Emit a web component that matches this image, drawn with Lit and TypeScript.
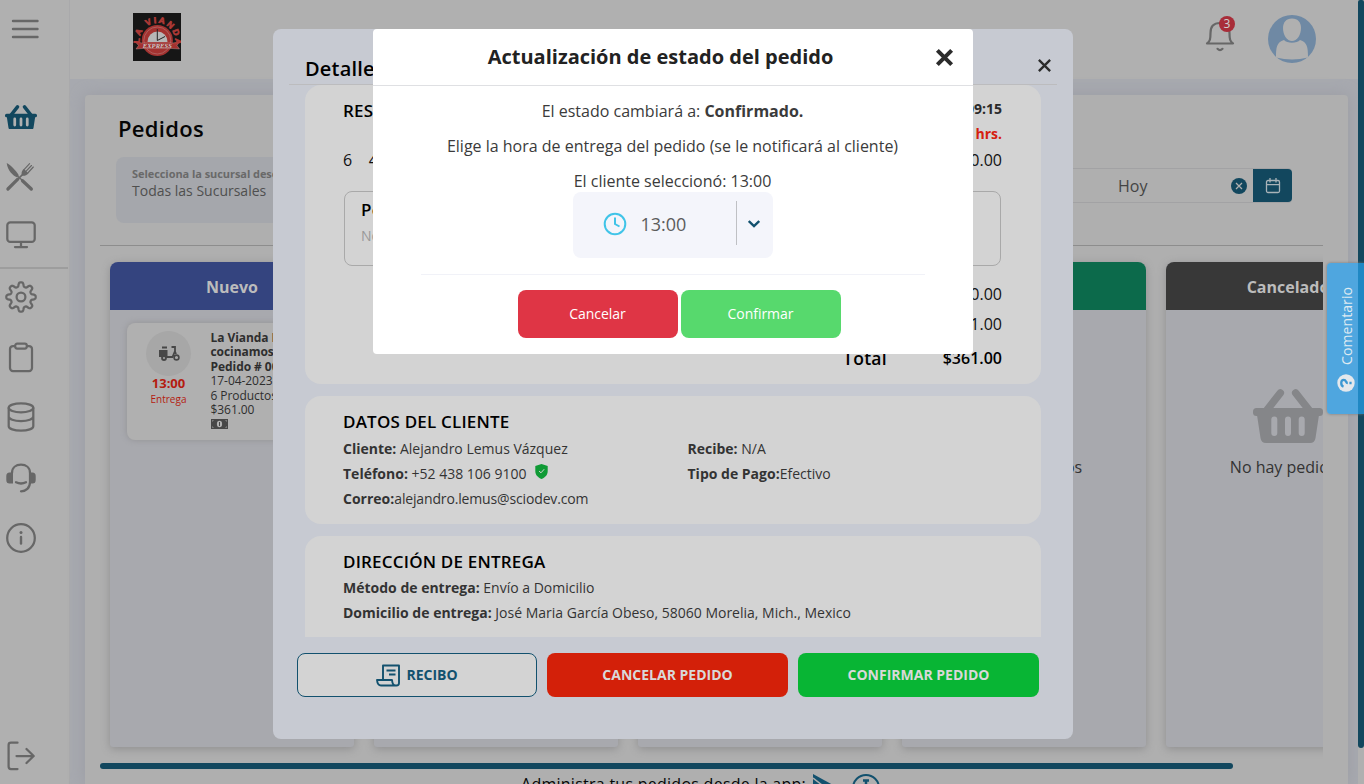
import { LitElement, html, svg, css } from "lit";
import { customElement } from "lit/decorators.js";

const gearPath = (() => {
  const pts: string[] = [];
  for (let i = 0; i < 240; i++) {
    const a = (i / 240) * Math.PI * 2;
    const r = 12.6 + 2.2 * Math.tanh(1.8 * Math.cos(8 * a));
    pts.push(`${(16 + r * Math.cos(a)).toFixed(2)} ${(16 + r * Math.sin(a)).toFixed(2)}`);
  }
  return `M${pts.join("L")}Z`;
})();

const basket = (w: number, cls: string) => html`
  <svg class="basket ${cls}" width=${w} height=${(w * 54) / 70} viewBox="0 0 70 54">
    <path d="M14 21L27.3 4M56 21L42.7 4" class="bh" />
    <rect x="0" y="19" width="70" height="8" rx="3.5" />
    <path d="M4 26H66L62.5 49Q61.8 54 57 54H13Q8.200 54 7.500 49Z" />
    <path class="slot" d="M21.300 30.500V44M35 30.500V44M48.700 30.500V44" />
  </svg>`;

const navIcons: Record<string, unknown> = {
  food: svg`<path class="f" d="M1.700 2C5 3.500 10 8.500 13.800 14.200L11.800 16.200C8 14.800 2.600 9.500 1.700 2Z"/>
    <path d="M17.500 19.700L26.300 28" stroke-width="3.300"/><path d="M12 14.500L18 20" stroke-width="1.300"/>
    <path d="M12.800 18.200L2.900 28" stroke-width="3.200"/><path d="M12 19L18 13.200" stroke-width="1.600"/>
    <path class="f" d="M16.600 13.600C16.300 10.500 17.400 9.400 18.600 8.300L20 9L21.500 10.500L23 12L23.400 12.500C21.500 14.500 19.500 15 17.500 14.700Z"/>
    <path d="M18.800 8.900L24.600 2.600M20.900 10.300L26.500 4.500M22.800 12L28.300 6" stroke-width="1.150"/>`,
  screen: svg`<rect x="2.300" y="3.300" width="27.400" height="19.600" rx="3"/><path d="M16 23V28M10 28.100H22"/>`,
  gear: svg`<path d=${gearPath}/><circle cx="16" cy="16" r="4.400"/>`,
  clip: svg`<rect x="5" y="5" width="22" height="25" rx="3"/><rect class="bg" x="10.200" y="2.600" width="11.600" height="5" rx="2"/>`,
  data: svg`<ellipse cx="16" cy="6.800" rx="12.300" ry="4.500"/><path d="M3.700 7V25.200C3.700 27.700 9 29.700 16 29.700S28.300 27.700 28.300 25.200V7M3.700 15.500C3.700 18 9 20 16 20S28.300 18 28.300 15.500"/>`,
  headset: svg`<path d="M7 11C7 5.500 11 2.700 16 2.700S25 5.500 25 11V20C25 26 21 29.300 16 29.300M11 20.200Q16 22.800 21 20.200"/>
    <path class="f" d="M8 10.500H4.500Q1.300 10.500 1.300 14V18Q1.300 21.500 4.500 21.500H8ZM24 10.500H27.500Q30.700 10.500 30.700 14V18Q30.700 21.500 27.500 21.500H24Z"/>`,
  info: svg`<circle cx="16" cy="16" r="13.800"/><path d="M16 15V21.500" stroke-width="2.400"/><circle class="f" cx="16" cy="10.600" r="1.500"/>`,
  exit: svg`<path d="M12.500 2.700H6Q3.600 2.700 3.600 5V26.500Q3.600 29 6 29H12.500M11.500 16H28.500M21.500 9L28.700 16L21.500 23"/>`,
};
const nav = (n: string) => html`<svg class="ni" width="32" height="32" viewBox="0 0 32 32">${navIcons[n]}</svg>`;
const cross = (s: number, w: number) => html`<svg class="cross" width=${s} height=${s} viewBox="0 0 16 16"><path d="M2 2L14 14M14 2L2 14" stroke-width=${w}/></svg>`;

const columns = [
  { name: "Nuevo", cls: "blue", state: "order" },
  { name: "Confirmado", cls: "orange", state: "" },
  { name: "En camino", cls: "orange", state: "" },
  { name: "Entregado", cls: "green", state: "empty" },
  { name: "Cancelado", cls: "dark", state: "empty" },
];

@customElement("app-root")
export class AppRoot extends LitElement {
  static styles = css`
    :host { display: block; position: relative; width: 1364px; height: 784px; overflow: hidden; background: #a7a9af;
      font-family: "Open Sans", "Noto Sans", sans-serif; color: #333; }
    * { box-sizing: border-box; }
    svg { display: block; flex: none; }
    b { font-weight: 700; }
    .app { display: grid; grid-template-columns: 70px 1288px 6px; grid-template-rows: 784px; height: 784px; }
    .side { background: #b0b0b0; border-right: 1px solid #a9a9ab; display: flex; flex-direction: column; }
    .burger { height: 58px; padding: 19px 0 0 11px; }
    .nav { display: flex; flex-direction: column; padding-top: 29px; }
    .item { height: 60px; padding-left: 5px; display: flex; align-items: center; }
    .short { height: 56px; }
    .rule { height: 2px; width: 68px; margin: 4px 0 -2px; background: #9d9d9d; }
    .low { margin-top: 1px; }
    .out { margin-top: auto; margin-bottom: -2px; }
    .ni, .burger svg { fill: none; stroke: #676767; stroke-width: 2.250; stroke-linecap: round; stroke-linejoin: round; }
    .ni .f { fill: #676767; stroke: none; }
    .ni .bg { fill: #b0b0b0; }
    .basket { fill: #12475e; }
    .basket .bh { fill: none; stroke: #12475e; stroke-width: 7.500; stroke-linecap: round; }
    .basket .slot { fill: none; stroke: #b0b0b0; stroke-width: 6; stroke-linecap: round; }
    .basket.big { fill: #858689; }
    .basket.big .bh { stroke: #858689; }
    .basket.big .slot { stroke: #a8a9ae; }
    .main { display: flex; flex-direction: column; min-width: 0; min-height: 0; }
    .top { height: 79px; flex: none; background: #b0b0b0; display: flex; align-items: flex-start; padding: 13px 42px 0 63px; }
    .bellbox { position: relative; margin: 7px 0 0 auto; width: 32px; height: 34px; }
    .badge { position: absolute; left: 15px; top: -4px; width: 16px; height: 16px; border-radius: 50%; background: #a82d39; color: #ccc; font: 12px/16px "Noto Sans", sans-serif; text-align: center; }
    .avatar { margin: 2px 0 0 32px; }
    .panel { margin: 16px 10px 0 15px; flex: 1; background: #afafaf; border-radius: 4px 4px 0 0; box-shadow: 0 0 16px #9b9ca3; padding: 19px 25px 0 15px; display: flex; flex-direction: column; min-height: 0; }
    h1 { margin: 0 0 0 18px; font-size: 22px; line-height: 28px; font-weight: 600; color: #050505; letter-spacing: .3px; flex: none; }
    .filters { display: flex; margin-top: 15px; height: 66px; flex: none; padding: 0 31px 0 16px; justify-content: space-between; }
    .select { width: 260px; height: 66px; border-radius: 8px; background: #a5a7ac; padding: 8px 16px; white-space: nowrap; overflow: hidden; }
    .lab { font-size: 11px; line-height: 17px; font-weight: 700; color: #696969; letter-spacing: -.06px; }
    .val { font-size: 14px; line-height: 17px; color: #4f4f4f; }
    .date { display: flex; margin-top: 11px; height: 35px; width: 360px; border: 1px solid #a2a2a4; border-right: 0; border-radius: 4px; align-items: center; }
    .hoy { margin-left: auto; font-size: 16px; color: #444; width: 30px; }
    .clr { width: 16px; height: 16px; border-radius: 50%; background: #12475e; margin: 0 6px 0 83px; display: flex; align-items: center; justify-content: center; }
    .clr .cross { stroke: #b0b0b0; }
    .cal { width: 39px; height: 33px; background: #12475e; border-radius: 0 4px 4px 0; display: flex; align-items: center; justify-content: center; }
    .cal svg { fill: none; stroke: #a9b3b8; stroke-width: 1.300; }
    .board { display: flex; gap: 20px; border-top: 1px solid #8d8d8d; margin-top: 22px; padding: 16px 10px 0; height: 518px; flex: none; overflow: hidden; }
    .col { width: 244px; flex: none; height: 485px; border-radius: 8px 8px 3px 3px; background: #a8a9ae; box-shadow: 0 2px 8px #8f8f90; }
    .ch { height: 48px; border-radius: 8px 8px 0 0; font-size: 16px; line-height: 50px; font-weight: 700; color: #bcbcbc; text-align: center; }
    .blue { background: #34447f; } .orange { background: #9b5f1c; } .green { background: #0c6a4b; } .dark { background: #383838; }
    .empty { display: flex; flex-direction: column; align-items: center; padding-top: 79px; font-size: 16px; line-height: 24px; color: #333; gap: 12px; }
    .order { margin: 13px 17px; height: 117px; border-radius: 8px; background: #b0b0b0; box-shadow: 0 0 6px #929294; display: flex; padding: 8px 0 0 19px; overflow: hidden; }
    .who { width: 45px; display: flex; flex-direction: column; align-items: center; color: #b41c10; }
    .moto { width: 45px; height: 45px; border-radius: 50%; background: #a7a7a7; display: flex; align-items: center; justify-content: center; }
    .hr { font-size: 13px; font-weight: 700; line-height: 16px; margin-top: -1px; }
    .en { font-size: 10px; line-height: 17px; }
    .lines { margin-left: 19.500px; font-size: 12px; line-height: 14.400px; white-space: nowrap; color: #2e2e2e; letter-spacing: -.06px; }
    .lines svg { margin-top: 2px; }
    .thumb { height: 6px; width: 1133px; border-radius: 3px; background: #12475e; flex: none; }
    .foot { display: flex; align-self: flex-start; gap: 7px; font-size: 16px; line-height: 24px; color: #050505; padding: 3px 0 0 421px; font-weight: 500; letter-spacing: .26px; }
    .foot svg { margin-top: 2px; }
    .sb { background: #b0b0b0; }
    .sb div { height: 748px; background: #12475e; border-radius: 2px 2px 3px 3px; }
    .tab { position: absolute; left: 1327px; top: 263px; width: 37px; height: 151px; border-radius: 4px 0 0 4px; background: linear-gradient(90deg, #4fa6df 31px, #2088c4 31px); box-shadow: 0 0 3px #777; display: flex; flex-direction: column; align-items: center; color: #dfeaf2; }
    .tab span { writing-mode: vertical-rl; transform: rotate(180deg); font-size: 14px; line-height: 20px; height: 78px; margin: 24px 0 0 2px; letter-spacing: .1px; font-weight: 500; }
    .tab svg { margin-top: 9px; }
    .detail { position: absolute; left: 273px; top: 29px; width: 800px; height: 710px; border-radius: 8px; background: #c7cad2; padding: 0 16px; }
    .dh { height: 56px; border-bottom: 1px solid #bcbcbe; padding: 24px 5px 0 16px; display: flex; justify-content: space-between; font-size: 20px; line-height: 32px; font-weight: 600; color: #000; letter-spacing: .2px; }
    .dh .cross { margin-top: 5px; }
    .cross { stroke: #2b2b2b; fill: none; }
    .scroll { height: 552px; margin: 0 16px; overflow: hidden; display: flex; flex-direction: column; gap: 12px; }
    .card { background: #d3d3d3; border-radius: 16px; padding: 0 39px 0 38px; flex: none; white-space: nowrap; font-size: 14px; line-height: 25px; color: #333; }
    .c1 { height: 299px; } .c2 { height: 128px; } .c3 { height: 128px; }
    .ct { font-size: 17px; line-height: 24px; font-weight: 600; color: #000; letter-spacing: .2px; }
    .c2 .ct { padding-top: 14px; height: 40px; } .c3 .ct { padding-top: 14px; height: 39px; }
    .c1 { color: #111; }
    .r { display: flex; justify-content: space-between; }
    .r1 { padding-top: 11px; align-items: flex-start; }
    .r1 .ct { padding-top: 3px; }
    .stamp { text-align: right; font-weight: 700; color: #2a2a2a; }
    .red { color: #d5200f; }
    .big { font-size: 16px; line-height: 28px; }
    .note { margin: 17px 1px 0; height: 75px; border: 1px solid #a9a9a9; border-radius: 8px; padding: 6px 16px; }
    .note .g { color: #999; line-height: 28px; }
    .tot { display: flex; justify-content: flex-end; font-size: 16px; line-height: 30px; }
    .tot.first { padding-top: 13px; }
    .tot span:last-child { width: 115px; text-align: right; }
    .sum { font-weight: 600; color: #000; line-height: 38px; }
    .sum span:first-child { font-size: 17.500px; letter-spacing: .3px; }
    .two { display: grid; grid-template-columns: 344.500px 1fr; }
    .two .rt :first-child { line-height: 25px; }
    .two .rt { line-height: 24px; }
    .mail { letter-spacing: -.15px; }
    .tel { display: flex; align-items: center; }
    .tel svg { margin: -4px 0 0 8px; }
    .btns { display: grid; grid-template-columns: 240px 241px 241px; gap: 10px; margin: 16px 8px 0; }
    .btn { height: 44px; border-radius: 8px; display: flex; align-items: center; justify-content: center; gap: 5px; font-size: 14px; font-weight: 700; color: #d9d9d9; padding-bottom: 2px; }
    .rec { background: #d3d3d3; border: 1px solid #12516e; color: #12516e; }
    .rec svg { margin-top: 2px; }
    .no { background: #d32009; } .ok { background: #08b534; }
    .dialog { position: absolute; left: 373px; top: 29px; width: 600px; height: 325px; border-radius: 4px; background: #fff; color: #3b3b3b; display: flex; flex-direction: column; align-items: center; font-size: 16px; }
    .mh { width: 600px; height: 57px; flex: none; border-bottom: 1px solid #dfe0e3; display: grid; grid-template-columns: 1fr 20px; padding: 0 18px 0 0; align-items: center; text-align: center; font-size: 20px; font-weight: 700; color: #222; }
    .mh span { padding: 0 0 1px 13px; }
    .msgs { padding-top: 8px; line-height: 35px; text-align: center; height: 106px; margin-left: -1px; }
    .time { width: 200px; height: 66px; border-radius: 8px; background: #f4f5fb; display: flex; align-items: center; font-size: 18px; color: #5c5c5c; flex: none; padding-bottom: 2px; }
    .time .ck { margin: 0 13.500px 0 30px; }
    .time i { width: 1px; height: 44px; background: #bfc0c4; margin: -2px 11px 0 auto; }
    .time .chev { margin-right: 13px; }
    .line { width: 504px; height: 1px; background: #f1f2f8; margin: 16px 0 15px; flex: none; }
    .acts { display: flex; gap: 3px; padding-left: 13px; }
    .act { width: 160px; height: 48px; border-radius: 8px; color: #fff; font-size: 14px; font-weight: 500; line-height: 48px; text-align: center; letter-spacing: -.03px; padding-right: 1px; }
    .a1 { background: #df3545; } .a2 { background: #57d96d; }
  `;

  private logo() {
    return html`<svg width="48" height="48" viewBox="0 0 48 48">
      <rect width="48" height="48" fill="#161616"/>
      <path id="arc" d="M6.900 30.300A17.600 17.600 0 1 1 41.700 30.300L41 36" fill="none"/>
      <circle cx="24.300" cy="27.500" r="15.600" fill="#a33230"/><circle cx="24.300" cy="27.500" r="13.500" fill="none" stroke="#b98886" stroke-width=".5"/>
      <path d="M14.500 29A10 10.500 0 0 1 34.500 29Z" fill="#b7b7b7"/>
      <path d="M24.300 27.500V16M24.300 27.500L32 23.500" stroke="#222" stroke-width="1" fill="none"/>
      <path d="M2.500 29L9 30H40L46 29L44 32.500L46.500 36L39 35.500H10L3 36L5.500 32.500Z" fill="#a33230" stroke="#c0a0a0" stroke-width=".4"/>
      <text font-family="Liberation Sans" font-weight="700" font-size="8.500" letter-spacing="1.900" fill="#b03a37" stroke="#b03a37" stroke-width=".7"><textPath href="#arc">LA VIANDA</textPath></text>
      <text x="24.300" y="35" text-anchor="middle" font-family="Liberation Serif" font-style="italic" font-weight="700" font-size="6.500" textLength="29" fill="#c9c9c9">EXPRESS</text>
    </svg>`;
  }

  private order() {
    return html`<div class="order">
      <div class="who">
        <div class="moto"><svg width="22" height="15" viewBox="0 0 22 15" fill="#474747"><path d="M4 .5H9V2.500H4ZM1 4H9.500V11H1Z"/><circle cx="6" cy="12" r="2.900"/><circle cx="6" cy="12" r="1" fill="#a7a7a7"/><path d="M13.500 1H17V5.500L18 8M17 5L14.500 11H8" fill="none" stroke="#474747" stroke-width="1.800"/><circle cx="18.500" cy="11.500" r="2.400" fill="none" stroke="#474747" stroke-width="1.600"/></svg></div>
        <div class="hr">13:00</div><div class="en">Entrega</div>
      </div>
      <div class="lines"><b>La Vianda Express<br>cocinamos para ti<br>Pedido # 00361</b><br>17-04-2023 09:15<br>6 Productos<br>$361.00
        <svg width="17" height="10" viewBox="0 0 17 10"><rect width="17" height="10" fill="#474747"/><ellipse cx="8.500" cy="5" rx="2.600" ry="3.200" fill="#b0b0b0"/><path d="M8.500 3V7" stroke="#474747"/><path d="M1.500 2.500V1.500H2.500M14.500 1.500H15.500V2.500M1.500 7.500V8.500H2.500M14.500 8.500H15.500V7.500" stroke="#8c8c8c" fill="none"/></svg>
      </div>
    </div>`;
  }

  private body(state: string) {
    if (state === "order") return this.order();
    if (state === "empty") return html`<div class="empty">${basket(70, "big")}<span>No hay pedidos</span></div>`;
    return null;
  }

  render() {
    return html`
      <div class="app">
        <div class="side">
          <div class="burger"><svg width="28" height="20" viewBox="0 0 28 20"><path d="M2 2H26.500M2 10H26.500M2 18H26.500" stroke-width="2.400"/></svg></div>
          <div class="nav">
            <div class="item">${basket(32, "")}</div>
            <div class="item">${nav("food")}</div>
            <div class="item short">${nav("screen")}</div>
            <div class="rule"></div>
            <div class="item">${nav("gear")}</div>
            <div class="item">${nav("clip")}</div>
            <div class="item">${nav("data")}</div>
            <div class="item low">${nav("headset")}</div>
            <div class="item">${nav("info")}</div>
          </div>
          <div class="item out">${nav("exit")}</div>
        </div>
        <div class="main">
          <div class="top">
            ${this.logo()}
            <div class="bellbox">
              <svg width="32" height="34" viewBox="0 0 32 34" fill="none" stroke="#676767" stroke-width="2.200" stroke-linecap="round" stroke-linejoin="round"><path d="M3 23.500C6 21.500 6.500 19 6.500 13C6.500 6.500 9.500 3 16 3S25.500 6.500 25.500 13C25.500 19 26 21.500 29 23.500Z"/><path d="M13.500 28.800Q16 31.300 18.500 28.800"/></svg>
              <div class="badge">3</div>
            </div>
            <svg class="avatar" width="48" height="48" viewBox="0 0 48 48"><circle cx="24" cy="24" r="24" fill="#6f89a4"/><path d="M24 3.500C30 3.500 33 7.500 33 13C33 20 29 26 24 26S15 20 15 13C15 7.500 18 3.500 24 3.500ZM8 42.500C8 33 8.500 27 16 25C19 28.500 29 28.500 32 25C39.500 27 40 33 40 42.500Q24 46.500 8 42.500Z" fill="#b0b0b0"/></svg>
          </div>
          <div class="panel">
            <h1>Pedidos</h1>
            <div class="filters">
              <div class="select"><div class="lab">Selecciona la sucursal deseada</div><div class="val">Todas las Sucursales</div></div>
              <div class="date"><span class="hoy">Hoy</span><span class="clr">${cross(8, 2.5)}</span>
                <span class="cal"><svg width="16" height="16" viewBox="0 0 16 16"><rect x="1.500" y="2.500" width="13" height="12" rx="1.500"/><path d="M1.500 6.700H14.500M5 0V4.500M11 0V4.500"/></svg></span></div>
            </div>
            <div class="board">
              ${columns.map((c) => html`<div class="col"><div class="ch ${c.cls}">${c.name}</div>${this.body(c.state)}</div>`)}
            </div>
            <div class="thumb"></div>
            <div class="foot"><span>Administra tus pedidos desde la app:</span>
              <svg width="20" height="22" viewBox="0 0 20 22"><path d="M0 0L20 11L0 22Z" fill="#12516e"/><path d="M0 4L9 11L0 18" fill="none" stroke="#afafaf" stroke-width="1.500"/></svg>
              <svg width="52" height="28" viewBox="-8 0 52 28" fill="none" stroke="#12516e" stroke-width="2"><circle cx="18" cy="14" r="13"/><path d="M15 6.500H21M18 6V12" stroke-width="2.500"/></svg>
            </div>
          </div>
        </div>
        <div class="sb"><div></div></div>
      </div>

      <div class="detail">
        <div class="dh"><span>Detalle del pedido</span>${cross(15, 2.5)}</div>
        <div class="scroll">
          <div class="card c1">
            <div class="r r1"><span class="ct">RESUMEN</span><div class="stamp">17-04-2023 09:15<div class="red">13:00 hrs.</div></div></div>
            <div class="r big"><span>6 &nbsp;&nbsp; 4 Quesos</span><span>$360.00</span></div>
            <div class="note"><div class="ct">Personalización</div><div class="g">No hay notas</div></div>
            <div class="tot first"><span>Subtotal</span><span>$360.00</span></div>
            <div class="tot"><span>Envío</span><span>$1.00</span></div>
            <div class="tot sum"><span>Total</span><span>$361.00</span></div>
          </div>
          <div class="card c2">
            <div class="ct">DATOS DEL CLIENTE</div>
            <div class="two">
              <div><div><b>Cliente:</b> Alejandro Lemus Vázquez</div>
                <div class="tel"><span><b>Teléfono:</b> +52 438 106 9100</span><svg width="13" height="15" viewBox="0 0 13 15"><path d="M6.500 0L12.700 2V7C12.700 11 10 13.500 6.500 15C3 13.500 .3 11 .3 7V2Z" fill="#0f9a35"/><path d="M4 7L6 8.800L9.200 5.200" fill="none" stroke="#d3d3d3"/></svg></div>
                <div><b>Correo:</b><span class="mail">alejandro.lemus@sciodev.com</span></div></div>
              <div class="rt"><div><b>Recibe:</b> N/A</div><div><b>Tipo de Pago:</b>Efectivo</div></div>
            </div>
          </div>
          <div class="card c3">
            <div class="ct">DIRECCIÓN DE ENTREGA</div>
            <div><b>Método de entrega:</b> Envío a Domicilio</div>
            <div><b>Domicilio de entrega:</b> José Maria García Obeso, 58060 Morelia, Mich., Mexico</div>
          </div>
        </div>
        <div class="btns">
          <div class="btn rec"><svg width="25" height="23" viewBox="0 0 25 23" fill="none" stroke="#12516e" stroke-width="1.900" stroke-linejoin="round"><path d="M7 15V1.500H23V19Q23 21.500 20.500 21.500H5Q1.500 21.500 1 16H16Q16.500 21.500 19.500 21.500M10.500 6.500H19.500M13 10.500H19.500"/></svg><span>RECIBO</span></div>
          <div class="btn no">CANCELAR PEDIDO</div>
          <div class="btn ok">CONFIRMAR PEDIDO</div>
        </div>
      </div>

      <div class="dialog">
        <div class="mh"><span>Actualización de estado del pedido</span>${cross(19, 3.4)}</div>
        <div class="msgs">El estado cambiará a: <b>Confirmado.</b><br>Elige la hora de entrega del pedido (se le notificará al cliente)<br>El cliente seleccionó: 13:00</div>
        <div class="time"><svg class="ck" width="24" height="24" viewBox="0 0 24 24" fill="none" stroke="#40c4e8" stroke-width="2"><circle cx="12" cy="12" r="10.300"/><path d="M12 5.500V12L16.500 14.500"/></svg><span>13:00</span><i></i>
          <svg class="chev" width="12" height="8" viewBox="0 0 12 8" fill="none" stroke="#12516e" stroke-width="2.400"><path d="M.8 1L6 6L11.200 1"/></svg></div>
        <div class="line"></div>
        <div class="acts"><div class="act a1">Cancelar</div><div class="act a2">Confirmar</div></div>
      </div>

      <div class="tab"><span>Comentario</span>
        <svg width="18" height="18" viewBox="0 0 18 18"><circle cx="9" cy="9" r="8.700" fill="#e4e8ec"/><path d="M6.500 12.800C3.300 11.500 3.600 5.800 6.800 5.800C9.600 5.800 8.300 9 10.800 9M12.400 9H14.600" fill="none" stroke="#3c98d3" stroke-width="2.300"/></svg>
      </div>
    `;
  }
}
